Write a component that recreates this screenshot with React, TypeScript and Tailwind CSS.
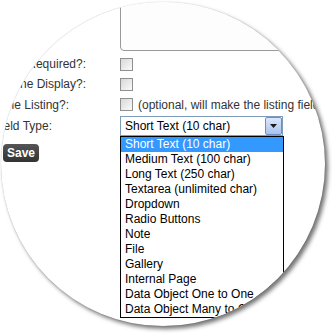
const options = [
  'Short Text (10 char)',
  'Medium Text (100 char)',
  'Long Text (250 char)',
  'Textarea (unlimited char)',
  'Dropdown',
  'Radio Buttons',
  'Note',
  'File',
  'Gallery',
  'Internal Page',
  'Data Object One to One',
  'Data Object Many to One',
]

function Checkbox() {
  return <span className="block w-[13px] h-[13px] border border-[#8f8f8f] bg-gradient-to-br from-[#d8d8d8] to-[#fafafa] shrink-0" />
}

function Label({ text, pad }: { text: string; pad: string }) {
  return (
    <div className={`w-[119px] shrink-0 flex justify-end whitespace-nowrap ${pad}`}>
      <span>{text}</span>
    </div>
  )
}

export default function App() {
  return (
    <div className="w-[336px] h-[336px] bg-white pl-px pt-[2px] overflow-hidden">
      <div className="w-[324px] h-[324px] rounded-full overflow-hidden bg-white shadow-[0_0_1px_rgba(0,0,0,0.3),3px_3px_4px_rgba(0,0,0,0.55)]">
        <div className="w-[500px] text-[12px] leading-[14px] text-[#333] font-['Liberation_Sans',Arial,sans-serif]">
          <div className="ml-[119px] mt-[-21px] h-[70px] w-[300px] border border-[#999] rounded-[4px] bg-[#fdfdfd]" />

          <div className="mt-[3px] flex flex-col">
            <div className="flex items-center h-[20px]">
              <Label text="Required?:" pad="pr-[34px]" />
              <Checkbox />
            </div>
            <div className="flex items-center h-[20px]">
              <Label text="Show in the Display?:" pad="pr-[34px]" />
              <Checkbox />
            </div>
            <div className="flex items-center h-[21px]">
              <Label text="Show in the Listing?:" pad="pr-[51px]" />
              <Checkbox />
              <span className="ml-[5px] whitespace-nowrap">(optional, will make the listing field visible)</span>
            </div>
            <div className="flex items-center h-[21px]">
              <Label text="Field Type:" pad="pr-[68px]" />
              <div className="relative w-[163px] h-[20px] border border-[#7f9db9] bg-white flex items-center text-black">
                <span className="flex-1 pl-[4px] whitespace-nowrap">Short Text (10 char)</span>
                <span className="w-[17px] h-[18px] flex items-center justify-center rounded-[2px] border border-[#6f8fc0] bg-gradient-to-b from-[#dbe7fb] to-[#a9c3ee]">
                  <svg width="7" height="4" viewBox="0 0 7 4">
                    <path d="M0 0h7L3.5 4z" fill="#1a1a1a" />
                  </svg>
                </span>
                <div className="absolute left-[-1px] top-[19px] w-[164px] border border-black bg-white z-10">
                  {options.map((o, i) => (
                    <div
                      key={o}
                      className={`h-[15px] leading-[15px] pl-[4px] whitespace-nowrap ${i === 0 ? 'bg-[#3399ff] text-white' : 'text-black'}`}
                    >
                      {o}
                    </div>
                  ))}
                </div>
              </div>
            </div>
          </div>

          <div className="mt-[8px] ml-[2px]">
            <button className="h-[18px] px-[4px] rounded-[4px] bg-gradient-to-b from-[#555] to-[#333] text-white font-bold text-[12px] leading-[18px]">
              Save
            </button>
          </div>
        </div>
      </div>
    </div>
  )
}
